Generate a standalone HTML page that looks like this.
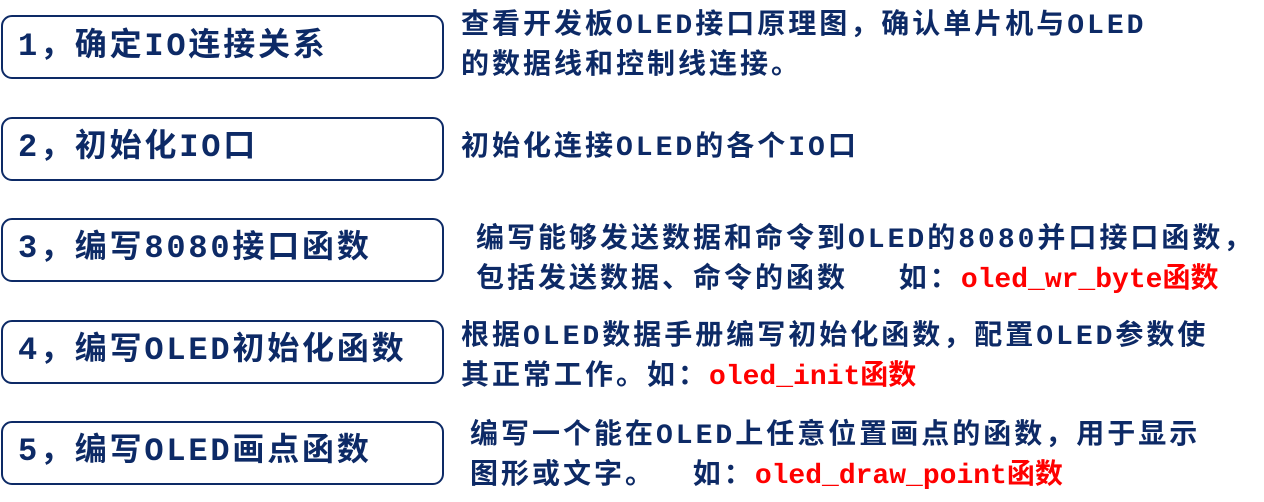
<!DOCTYPE html>
<html><head><meta charset="utf-8"><style>
body{margin:0;width:1264px;height:502px;background:#fff;position:relative;overflow:hidden;font-family:"Liberation Mono","Noto Sans CJK SC",monospace;font-weight:bold;color:#0d2a66}
.b{position:absolute;left:1px;width:439px;height:60px;border:2px solid #0d2a66;border-radius:11px}
.l{position:absolute;left:18px;font-size:32px;letter-spacing:2.8px;line-height:40px;white-space:nowrap}
.r{position:absolute;font-size:28px;letter-spacing:3px;line-height:40px;white-space:nowrap}
.red{color:#f00;letter-spacing:0}
</style></head><body>
<div class="b" style="top:15px"></div>
<div class="b" style="top:117px"></div>
<div class="b" style="top:218px"></div>
<div class="b" style="top:320px"></div>
<div class="b" style="top:421px"></div>
<div class="l" style="top:27px">1，确定IO连接关系</div>
<div class="l" style="top:128px">2，初始化IO口</div>
<div class="l" style="top:229px">3，编写8080接口函数</div>
<div class="l" style="top:331px">4，编写OLED初始化函数</div>
<div class="l" style="top:432px">5，编写OLED画点函数</div>
<div class="r" style="left:461px;top:7px">查看开发板OLED接口原理图，确认单片机与OLED<br>的数据线和控制线连接。</div>
<div class="r" style="left:461px;top:129px">初始化连接OLED的各个IO口</div>
<div class="r" style="left:476px;top:221px">编写能够发送数据和命令到OLED的8080并口接口函数，<br>包括发送数据、命令的函数　 如：<span class="red">oled_wr_byte函数</span></div>
<div class="r" style="left:461px;top:318px">根据OLED数据手册编写初始化函数，配置OLED参数使<br>其正常工作。如：<span class="red">oled_init函数</span></div>
<div class="r" style="left:470px;top:417px">编写一个能在OLED上任意位置画点的函数，用于显示<br>图形或文字。　 如：<span class="red">oled_draw_point函数</span></div>
</body></html>
